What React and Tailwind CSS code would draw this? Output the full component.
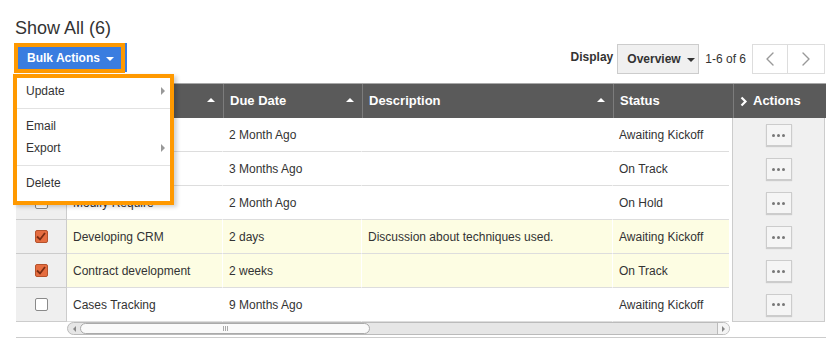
import { ChevronLeft, ChevronRight } from "lucide-react";

const rows = [
  { name: "Billing", due: "2 Month Ago", desc: "", status: "Awaiting Kickoff", checked: false },
  { name: "Support", due: "3 Months Ago", desc: "", status: "On Track", checked: false },
  { name: "Modify Require", due: "2 Month Ago", desc: "", status: "On Hold", checked: false },
  { name: "Developing CRM", due: "2 days", desc: "Discussion about techniques used.", status: "Awaiting Kickoff", checked: true },
  { name: "Contract development", due: "2 weeks", desc: "", status: "On Track", checked: true },
  { name: "Cases Tracking", due: "9 Months Ago", desc: "", status: "Awaiting Kickoff", checked: false },
];

const SortCaret = () => (
  <span className="absolute right-[8px] top-[14px] h-0 w-0 border-x-[4px] border-b-[4px] border-x-transparent border-b-white" />
);

const SubArrow = () => (
  <span className="absolute right-[5px] top-[7px] h-0 w-0 border-y-[4px] border-l-[4px] border-y-transparent border-l-[#999]" />
);

const Checkbox = ({ checked }) =>
  checked ? (
    <span className="flex h-[13px] w-[13px] items-center justify-center rounded-[2px] border border-[#b5522c] bg-[#e56d40]">
      <svg width="10" height="9" viewBox="0 0 10 9">
        <path d="M1 4.5 L4 7.5 L9 1" fill="none" stroke="#7a2c12" strokeWidth="1.8" />
      </svg>
    </span>
  ) : (
    <span className="h-[13px] w-[13px] rounded-[2px] border border-[#8a8a8a] bg-white" />
  );

const Dots = () => (
  <span className="flex h-[22px] w-[26px] items-center justify-center gap-[2px] border border-[#ccc] bg-[#f5f5f5] shadow-[0_1px_1px_rgba(0,0,0,0.15)]">
    <span className="h-[3px] w-[3px] rounded-full bg-[#777]" />
    <span className="h-[3px] w-[3px] rounded-full bg-[#777]" />
    <span className="h-[3px] w-[3px] rounded-full bg-[#777]" />
  </span>
);

const App = () => {
  return (
    <div className="relative h-[357px] w-[834px] overflow-hidden bg-white font-['Liberation_Sans',Arial,sans-serif] text-[#333]">
      {/* Title */}
      <div className="pl-[15px] pt-[17px] text-[18px] leading-[22px] text-[#333]">Show All (6)</div>

      {/* Toolbar */}
      <div className="mt-[4px] flex items-start pl-[14px] pr-[9px]">
        <div className="flex">
          <div className="border-4 border-[#ff9900]">
            <div className="flex h-[22px] w-[103px] items-center bg-[#3a7de0] pl-[9px] text-[12px] font-bold text-white">
              Bulk Actions
              <span className="ml-[6px] mt-[1px] h-0 w-0 border-x-[4px] border-t-[4px] border-x-transparent border-t-white" />
            </div>
          </div>
          <div className="h-[29px] w-[2px] bg-[#3a7de0]" />
        </div>

        <div className="ml-auto mt-[1px] flex items-start">
          <span className="mt-[5px] text-[12px] font-bold leading-[16px] text-[#333]">Display</span>
          <div className="ml-[4px] flex h-[30px] w-[82px] items-center border border-[#ccc] bg-[#f0f0f0] pl-[9px] text-[12px] font-bold">
            Overview
            <span className="ml-[6px] mt-[1px] h-0 w-0 border-x-[4px] border-t-[4px] border-x-transparent border-t-[#333]" />
          </div>
          <span className="ml-[6px] mt-[7px] text-[12px] leading-[16px]">1-6 of 6</span>
          <div className="ml-[6px] flex">
            <div className="flex h-[30px] w-[36px] items-center justify-center border border-[#ddd] bg-white">
              <ChevronLeft size={24} strokeWidth={1.4} color="#999" />
            </div>
            <div className="flex h-[30px] w-[37px] items-center justify-center border border-l-0 border-[#ddd] bg-white">
              <ChevronRight size={24} strokeWidth={1.4} color="#999" />
            </div>
          </div>
        </div>
      </div>

      {/* Table */}
      <div className="ml-[16px] mt-[9px] w-[810px]">
        <div className="flex h-[35px] border-t border-[#a8a8a8] bg-[#5a5a5a] text-[13px] font-bold text-white">
          <div className="w-[51px]" />
          <div className="relative flex w-[156px] items-center border-l border-[#7c7c7c] px-[6px]">
            Name
            <SortCaret />
          </div>
          <div className="relative flex w-[139px] items-center border-l border-[#7c7c7c] px-[6px]">
            Due Date
            <SortCaret />
          </div>
          <div className="relative flex w-[251px] items-center border-l border-[#7c7c7c] px-[6px]">
            Description
            <SortCaret />
          </div>
          <div className="flex w-[120px] items-center border-l border-[#7c7c7c] px-[6px]">Status</div>
          <div className="flex w-[93px] items-center gap-[5px] border-l border-[#7c7c7c] pl-[6px]">
            <svg width="8" height="11" viewBox="0 0 8 11">
              <path d="M1.5 1.5 L5.5 5.5 L1.5 9.5" fill="none" stroke="white" strokeWidth="2.2" />
            </svg>
            Actions
          </div>
        </div>

        {rows.map((r, i) => {
          const bg = r.checked ? "bg-[#fdfde3]" : "bg-white";
          return (
            <div key={i} className="flex h-[34px] text-[12px]">
              <div className="flex w-[51px] items-center justify-center border-b border-r border-[#ccc] bg-[#efefef]">
                <Checkbox checked={r.checked} />
              </div>
              <div className={`flex w-[155px] items-center border-b border-[#ddd] px-[6px] pt-px ${bg}`}>{r.name}</div>
              <div className={`flex w-[139px] items-center border-b border-l border-[#ddd] border-l-white px-[6px] pt-px ${bg}`}>{r.due}</div>
              <div className={`flex w-[251px] items-center border-b border-l border-[#ddd] border-l-white px-[6px] pt-px ${bg}`}>{r.desc}</div>
              <div className={`flex w-[117px] items-center border-b border-l border-[#ddd] border-l-white px-[6px] pt-px ${bg}`}>{r.status}</div>
              <div className="w-[3px] bg-white" />
              <div className={`flex w-[93px] items-center justify-center border-x border-[#ccc] bg-[#f0f0f0] ${i === rows.length - 1 ? "border-b" : ""}`}>
                <Dots />
              </div>
            </div>
          );
        })}

        {/* Horizontal scrollbar */}
        <div className="flex h-[14px]">
          <div className="w-[51px]" />
          <div className="flex h-[13px] w-[663px] items-center rounded-[7px] border border-[#bbb] bg-[#e6e6e6]">
            <div className="flex h-full w-[12px] items-center justify-center">
              <span className="h-0 w-0 border-y-[3px] border-r-[3px] border-y-transparent border-r-[#888]" />
            </div>
            <div className="flex h-[11px] w-[290px] items-center justify-center rounded-[6px] border border-[#aaa] bg-[#fafafa]">
              <span className="flex gap-[1px]">
                <span className="h-[5px] w-px bg-[#aaa]" />
                <span className="h-[5px] w-px bg-[#aaa]" />
                <span className="h-[5px] w-px bg-[#aaa]" />
              </span>
            </div>
            <div className="ml-auto flex h-full w-[12px] items-center justify-center rounded-r-[7px] border-l border-[#bbb] bg-[#f4f4f4]">
              <span className="h-0 w-0 border-y-[3px] border-l-[3px] border-y-transparent border-l-[#888]" />
            </div>
          </div>
        </div>
        <div className="mt-[1px] h-px w-[810px] bg-[#ccc]" />
      </div>

      {/* Bulk actions menu */}
      <div className="absolute left-[13px] top-[74px] w-[161px] border-4 border-[#ff9900] bg-white pt-[2px] pb-[7px] text-[12px] text-[#333] shadow-[3px_2px_4px_rgba(0,0,0,0.18)]">
        <div className="relative flex h-[22px] items-center pl-[9px]">
          Update
          <SubArrow />
        </div>
        <div className="my-[6px] h-px bg-[#e2e2e2]" />
        <div className="flex h-[22px] items-center pl-[9px]">Email</div>
        <div className="relative flex h-[22px] items-center pl-[9px]">
          Export
          <SubArrow />
        </div>
        <div className="my-[6px] h-px bg-[#e2e2e2]" />
        <div className="flex h-[22px] items-center pl-[9px]">Delete</div>
      </div>
    </div>
  );
};

export default App;
